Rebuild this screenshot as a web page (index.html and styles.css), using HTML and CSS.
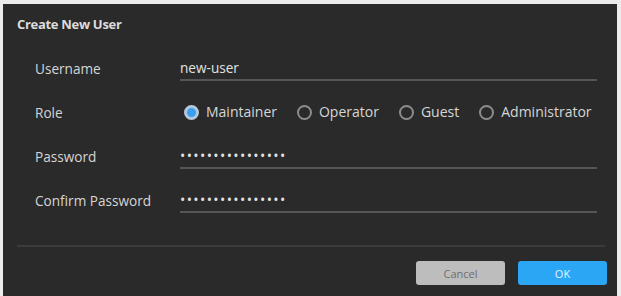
FILE: index.html
```html
<!DOCTYPE html>
<html lang="en">
<head>
    <meta charset="UTF-8">
    <title>Create New User</title>
    <link rel="stylesheet" href="styles.css">
</head>
<body>
    <!-- Dialog -->
    <div class="dialog">
        <div class="dialog-title">Create New User</div>

        <div class="form">
            <div class="row">
                <div class="label">Username</div>
                <div class="field">new-user</div>
            </div>
            <div class="row">
                <div class="label">Role</div>
                <div class="radios">
                    <span class="radio checked"></span><span class="radio-text">Maintainer</span>
                    <span class="radio"></span><span class="radio-text">Operator</span>
                    <span class="radio"></span><span class="radio-text">Guest</span>
                    <span class="radio"></span><span class="radio-text">Administrator</span>
                </div>
            </div>
            <div class="row">
                <div class="label">Password</div>
                <div class="field dots">&bull;&bull;&bull;&bull;&bull;&bull;&bull;&bull;&bull;&bull;&bull;&bull;&bull;&bull;&bull;&bull;</div>
            </div>
            <div class="row">
                <div class="label">Confirm Password</div>
                <div class="field dots">&bull;&bull;&bull;&bull;&bull;&bull;&bull;&bull;&bull;&bull;&bull;&bull;&bull;&bull;&bull;&bull;</div>
            </div>
        </div>

        <div class="separator"></div>

        <div class="buttons">
            <button class="btn btn-cancel">Cancel</button>
            <button class="btn btn-ok">OK</button>
        </div>
    </div>
</body>
</html>
```

FILE: styles.css
```css
:root {
    --page-bg: #ececec;
    --dialog-bg: #2a2a2a;
    --text: #d6d6d6;
    --line: #565656;
    --sep: #3b3b3b;
    --ring: #8c8c8c;
    --blue: #2ba6f5;
}

body {
    margin: 0;
    background-color: var(--page-bg);
    font-family: 'Open Sans', 'Noto Sans', sans-serif;
    font-size: 13.6px;
    color: var(--text);
}

.dialog {
    margin: 4px 4px 0 3px;
    height: 292px;
    background-color: var(--dialog-bg);
    box-sizing: border-box;
    padding-top: 11px;
}

.dialog-title {
    line-height: 18px;
    padding-left: 14px;
    font-weight: bold;
    font-size: 13px;
    color: #dcdcdc;
    letter-spacing: -0.3px;
}

.form {
    padding: 13px 0 0 32px;
}

.row {
    display: flex;
    align-items: center;
    height: 44px;
}

.label {
    width: 145px;
    flex: 0 0 145px;
}

.field {
    width: 417px;
    line-height: 18px;
    padding: 4px 0 2px;
    border-bottom: 2px solid var(--line);
    color: #e2e2e2;
}

.dots {
    font-size: 14px;
    letter-spacing: 1.4px;
}

.radios {
    display: flex;
    align-items: center;
    padding-left: 4px;
    line-height: 18px;
    font-size: 14px;
}

.radio {
    width: 11px;
    height: 11px;
    border: 2px solid var(--ring);
    border-radius: 50%;
    margin-right: 7px;
}

.radio.checked {
    width: 9px;
    height: 9px;
    border: 3px solid #b4c8da;
    background-color: #3a9ff0;
}

.radio-text {
    margin-right: 20px;
}

.separator {
    margin: 23px 12px 0 14px;
    height: 2px;
    background-color: var(--sep);
}

.buttons {
    display: flex;
    justify-content: flex-end;
    gap: 13px;
    padding: 14px 10px 0 0;
}

.btn {
    width: 89px;
    height: 24px;
    border: none;
    border-radius: 3px;
    font-family: 'Open Sans', sans-serif;
    font-size: 11px;
}

.btn-cancel {
    background-color: #bdbdbd;
    color: #6e6e6e;
}

.btn-ok {
    background-color: var(--blue);
    color: #e4f4ff;
}
```
